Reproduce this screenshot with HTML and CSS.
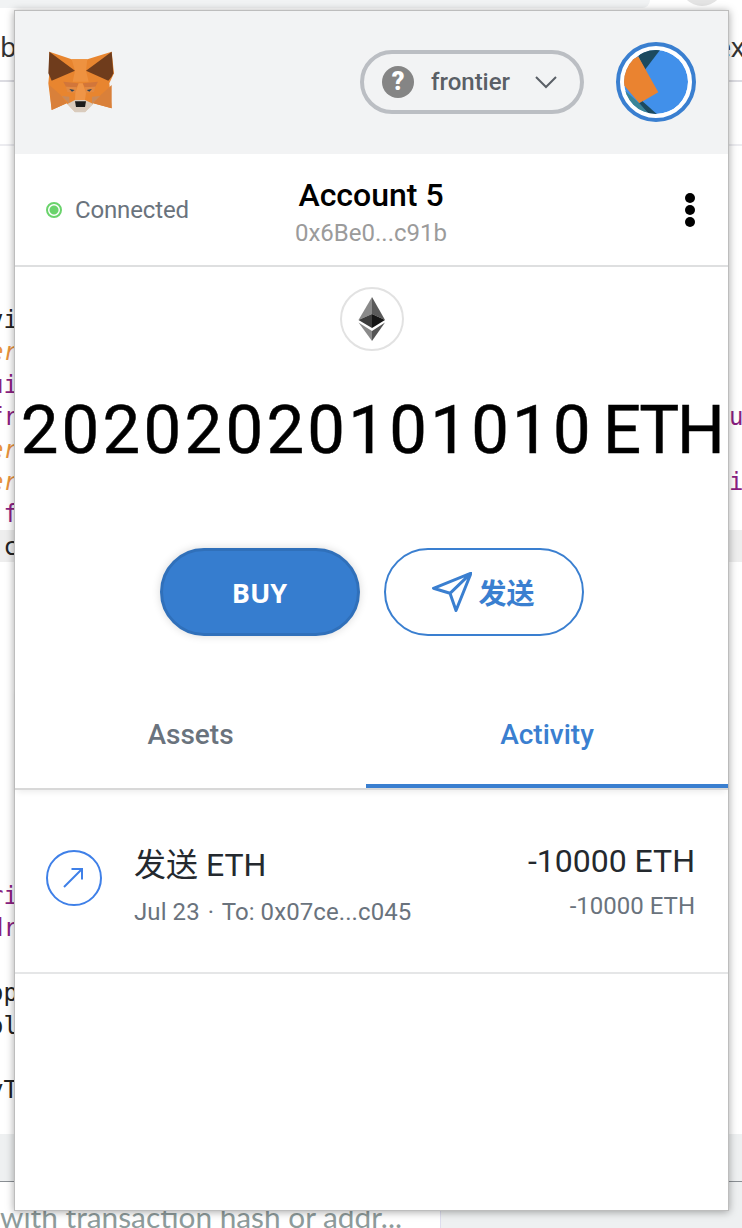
FILE: index.html
```html
<!DOCTYPE html>
<html lang="en">
<head>
<meta charset="utf-8">
<title>MetaMask</title>
<link rel="stylesheet" href="styles.css">
</head>
<body>
<div class="backdrop">
  <div class="tabstrip"></div>
  <div class="browser-btn"></div>
  <div class="rule rule-a"></div>
  <div class="rule rule-b"></div>
  <div class="nav-word nav-left">b</div>
  <div class="nav-word nav-right">ex</div>
  <div class="code-band"></div>
  <div class="footer-band"></div>
  <div class="footer-side"></div>
  <div class="code code-top">
    <div class="k">vi</div><div class="o">er</div><div class="p">ui</div><div class="p">fr</div><div class="o">er</div><div class="o">er</div><div class="p">&nbsp;f</div><div class="k">&nbsp;c</div>
  </div>
  <div class="code code-right">
    <div class="p">ur</div><div>&nbsp;</div><div class="p">ir</div>
  </div>
  <div class="code code-low">
    <div class="p">ri</div><div class="p">dr</div><div>&nbsp;</div><div class="k">op</div><div class="k">ol</div><div>&nbsp;</div><div class="k">yT</div>
  </div>
  <div class="footer-text">with transaction hash or addr...</div>
</div>

<main class="popup">
  <header class="app-header">
    <svg class="fox" viewBox="0 6 300 240" aria-label="MetaMask">
      <polygon fill="#e8852f" points="58,35 125,58 172,58 245,35 252,100 238,130 245,205 190,190 165,215 135,215 110,190 65,210 55,130 58,100"/>
      <polygon fill="#6f3c1c" points="58,35 135,92 65,122 60,110 55,100"/>
      <polygon fill="#6f3c1c" points="245,35 168,92 235,122 245,110 250,100"/>
      <polygon fill="#ee9240" points="125,58 172,58 168,92 176,125 128,125 135,92"/>
      <polygon fill="#d2763a" points="100,125 146,130 140,142 108,140"/>
      <polygon fill="#d2763a" points="204,125 158,130 164,142 196,140"/>
      <polygon fill="#e28a44" points="108,140 140,142 136,158 112,156"/>
      <polygon fill="#e28a44" points="196,140 164,142 168,158 192,156"/>
      <polygon fill="#ef9547" points="146,130 158,130 168,158 165,180 135,180 136,158"/>
      <polygon fill="#d9803a" points="58,135 92,165 110,190 65,210"/>
      <polygon fill="#d9803a" points="245,135 212,165 190,190 245,205"/>
      <polygon fill="#c98a5a" points="95,168 118,170 118,192"/>
      <polygon fill="#c98a5a" points="210,168 186,170 186,192"/>
      <polygon fill="#d9cbbd" points="112,192 135,180 165,180 190,192 165,217 135,217"/>
      <polygon fill="#1c1c1c" points="135,184 168,184 165,201 138,201"/>
      <polygon fill="#2a4258" points="118,147 134,150 126,155"/>
      <polygon fill="#2a4258" points="186,147 170,150 178,155"/>
    </svg>
    <div class="network">
      <span class="network-mark">?</span>
      <span class="network-name">frontier</span>
      <svg class="chevron" viewBox="0 0 22 13"><path d="M1 1l10 10L21 1"/></svg>
    </div>
    <div class="avatar">
      <svg viewBox="0 0 64 64" class="avatar-art">
        <circle cx="32" cy="32" r="32" fill="#4190ea"/>
        <polygon fill="#1c4a5f" points="14.3,6.5 21,19.8 36,0 19.3,0"/>
        <polygon fill="#ea8330" points="14.3,6.5 34.3,42.2 15.3,53.2 -4,30.5 -4,13.8"/>
        <polygon fill="#3a8596" points="-1,38.8 15.3,53.2 26,65.5 6,60.5"/>
        <polygon fill="#1c4a5f" points="15.3,53.2 18.5,51.3 33.3,64.5 25.3,64.5"/>
      </svg>
    </div>
  </header>

  <section class="account-row">
    <div class="status"><span class="status-dot"></span><span>Connected</span></div>
    <div class="account">
      <div class="account-name">Account 5</div>
      <div class="account-addr">0x6Be0...c91b</div>
    </div>
    <div class="menu-dots"><span></span><span></span><span></span></div>
  </section>

  <section class="overview">
    <div class="eth-badge">
      <svg viewBox="0 0 28 44" class="eth-icon">
        <polygon fill="#8a8a8a" points="14,0 0.5,23 14,17"/>
        <polygon fill="#5a5a5a" points="14,0 27,23 14,17"/>
        <polygon fill="#3c3c3c" points="0.5,23 14,17 14,31"/>
        <polygon fill="#161616" points="27,23 14,17 14,31"/>
        <polygon fill="#8a8a8a" points="0.5,25.5 14,34 14,44"/>
        <polygon fill="#555555" points="27,25.5 14,34 14,44"/>
      </svg>
    </div>
    <div class="balance"><span class="balance-value">20202020101010</span><span class="balance-unit">ETH</span></div>
    <div class="actions">
      <div class="btn btn-buy">BUY</div>
      <div class="btn btn-send">
        <svg viewBox="0 0 40 40" class="plane"><path d="M39 1.2L1.5 16.3l16.5 5L24 38.5zM39 1.2L18 21.3"/></svg>
        <span>发送</span>
      </div>
    </div>
  </section>

  <nav class="tabs">
    <div class="tab tab-assets">Assets</div>
    <div class="tab tab-active">Activity</div>
  </nav>

  <section class="tx">
    <svg class="tx-icon" viewBox="0 0 56 56">
      <circle cx="28" cy="28" r="27" />
      <path d="M18 37L36 19M25.5 19H36v10.5"/>
    </svg>
    <div class="tx-main">
      <div class="tx-title">发送 ETH</div>
      <div class="tx-sub">Jul 23 <span class="tx-sep">·</span> To: 0x07ce...c045</div>
    </div>
    <div class="tx-amounts">
      <div class="tx-amount">-10000 ETH</div>
      <div class="tx-fiat">-10000 ETH</div>
    </div>
  </section>
</main>
</body>
</html>
```
FILE: styles.css
```css
* { box-sizing: border-box; }
html, body { margin: 0; padding: 0; }
body {
  position: relative;
  width: 742px;
  height: 1228px;
  overflow: hidden;
  background: #fff;
  font-family: Roboto, "Noto Sans CJK SC", sans-serif;
}

/* page behind the extension popup */
.backdrop { position: absolute; inset: 0; overflow: hidden; }
.tabstrip { position: absolute; left: 0; top: 0; width: 650px; height: 8px; background: #f1f3f4; border-bottom-right-radius: 8px; }
.browser-btn { position: absolute; left: 680px; top: -38px; width: 44px; height: 44px; border-radius: 50%; background: #e4e4e4; }
.rule { position: absolute; left: 0; right: 0; height: 2px; }
.rule-a { top: 80px; background: #dcdce2; }
.rule-b { top: 144px; background: #ececf0; }
.nav-word { position: absolute; top: 31px; font: 27px/32px "Noto Sans", sans-serif; color: #333; }
.nav-left { left: 0; }
.nav-right { left: 716px; }
.code-band { position: absolute; left: 0; right: 0; top: 530px; height: 32px; background: #eeeeee; }
.footer-band { position: absolute; left: 0; right: 0; top: 1134px; height: 48px; background: #eef0f1; border-bottom: 1px solid #8a8f94; }
.footer-side { position: absolute; left: 440px; right: 0; top: 1182px; bottom: 0; background: #eef0f1; border-left: 1px solid #dde; }
.code { position: absolute; font: 24px/32.4px "DejaVu Sans Mono", monospace; white-space: nowrap; }
.code-top { left: -11px; top: 304px; }
.code-right { left: 729px; top: 401px; }
.code-low { left: -11px; top: 880px; }
.code .k { color: #222; }
.code .p { color: #8a1f82; }
.code .o { color: #e8923c; font-style: italic; }
.footer-text { position: absolute; left: 0; top: 1200px; font: 29.8px/34px Lato, sans-serif; color: #8d9b9b; white-space: nowrap; }

/* popup */
.popup {
  position: absolute;
  left: 14px;
  top: 10px;
  width: 715px;
  height: 1201px;
  background: #fff;
  border: 1px solid #bdbdbd;
  box-shadow: 0 1px 8px rgba(0, 0, 0, .35);
  display: flex;
  flex-direction: column;
}

.app-header { height: 143px; display: flex; align-items: center; padding: 0 32px 1px 15px; background: #f2f3f4; }
.fox { width: 100px; height: 80px; filter: blur(.4px); }
.network {
  margin-left: auto;
  width: 224px;
  height: 64px;
  border: 4px solid #bbbec3;
  border-radius: 32px;
  display: flex;
  align-items: center;
  padding: 0 23px 0 18px;
}
.network-mark {
  width: 32px; height: 32px; border-radius: 50%;
  background: #858585; color: #fff;
  font: 900 25px/32px Roboto, sans-serif; text-align: center;
}
.network-name { margin-left: 17px; font-size: 24px; font-weight: 500; color: #5a5f66; }
.chevron { margin-left: auto; width: 22px; height: 13px; fill: none; stroke: #5a5f66; stroke-width: 2; }
.avatar {
  margin-left: 32px;
  width: 80px; height: 80px;
  border: 4px solid #3a7fd0;
  border-radius: 50%;
  padding: 4px;
  background: #fff;
}
.avatar-art { display: block; width: 64px; height: 64px; border-radius: 50%; overflow: hidden; margin: 0; }

.account-row {
  height: 113px;
  border-bottom: 2px solid #dedfe0;
  display: grid;
  grid-template-columns: 1fr auto 1fr;
  align-items: center;
  padding: 0 32px 0 31px;
}
.status { display: flex; align-items: center; gap: 13px; font-size: 24px; color: #6a737d; letter-spacing: -.15px; }
.status-dot { width: 16px; height: 16px; border-radius: 50%; border: 2px solid #6ad36c; background: radial-gradient(circle, #6ad36c 0 4px, #fff 5px); }
.account { text-align: center; padding-top: 6px; }
.account-name { font-size: 32px; font-weight: 500; line-height: 36px; color: #000; margin-top: -1px; }
.account-addr { margin-top: 5px; font-size: 24px; line-height: 30px; color: #9b9b9b; }
.menu-dots { justify-self: end; display: flex; flex-direction: column; gap: 2px; margin-right: 1px; }
.menu-dots span { width: 10px; height: 10px; border-radius: 50%; background: #000; }

.overview { display: flex; flex-direction: column; align-items: center; padding-top: 20px; }
.eth-badge { width: 64px; height: 64px; border: 2px solid #e2e2e2; border-radius: 50%; display: flex; align-items: center; justify-content: center; }
.eth-icon { width: 28px; height: 44px; }
.balance { margin-top: 34px; height: 90px; font-size: 67px; line-height: 90px; color: #000; -webkit-text-stroke: .5px #000; letter-spacing: 3.3px; white-space: nowrap; }
.balance-unit { margin-left: 9px; letter-spacing: -2.4px; }
.actions { margin-top: 73px; display: flex; gap: 24px; }
.btn { width: 200px; height: 88px; border-radius: 44px; display: flex; align-items: center; justify-content: center; font-weight: 700; font-size: 27px; }
.btn-buy { background: #367dcf; border: 3px solid #3070ba; color: #fff; font-family: "Open Sans", sans-serif; box-shadow: 0 0 8px rgba(0, 0, 0, .15); }
.btn-send { background: #fff; border: 2px solid #3a7fd0; color: #3a7fd0; gap: 6px; font-size: 28px; font-family: "Noto Sans CJK SC", sans-serif; }
.plane { width: 40px; height: 40px; fill: none; stroke: #3a7fd0; stroke-width: 3; stroke-linejoin: round; stroke-linecap: round; }

.tabs { margin-top: 50px; height: 104px; display: flex; border-bottom: 2px solid #d8d8d8; box-shadow: 0 4px 6px -2px rgba(0, 0, 0, .08); }
.tab { display: flex; align-items: center; justify-content: center; padding-bottom: 2px; font-size: 28px; font-weight: 500; color: #6a737d; border-bottom: 4px solid transparent; }
.tab-assets { width: 351px; }
.tab-active { flex: 1; color: #3a7fd0; border-bottom-color: #3a7fd0; }

.tx { height: 184px; display: flex; align-items: flex-start; padding: 60px 33px 0 31px; border-bottom: 2px solid #e5e6e7; }
.tx-icon { width: 56px; height: 56px; fill: none; stroke: #3f80e8; stroke-width: 2; }
.tx-main { margin-left: 32px; margin-top: -4px; }
.tx-title { font-size: 32px; line-height: 38px; color: #24292e; }
.tx-sub { margin-top: 13px; font-size: 24px; line-height: 30px; color: #6a737d; letter-spacing: .08px; }
.tx-sep { margin: 0 2px; }
.tx-amounts { margin-left: auto; text-align: right; margin-top: -8px; }
.tx-amount { font-size: 32px; line-height: 38px; color: #24292e; }
.tx-fiat { margin-top: 11px; font-size: 24px; line-height: 30px; color: #6a737d; }
```
